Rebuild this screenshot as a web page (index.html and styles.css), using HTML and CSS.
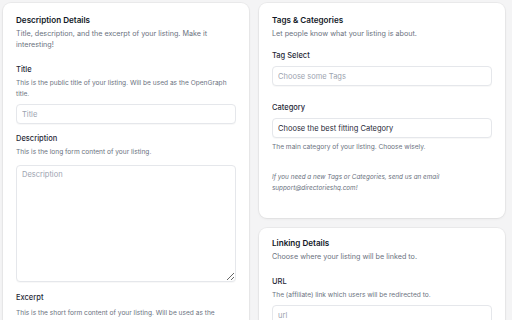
FILE: index.html
```html
<!DOCTYPE html>
<html lang="en">
<head>
    <meta charset="UTF-8">
    <meta name="viewport" content="width=device-width, initial-scale=1.0">
    <title>Edit Listing</title>
    <link rel="stylesheet" href="styles.css">
</head>
<body>
    <div class="layout">
        <div class="column">
            <section class="card">
                <h2>Description Details</h2>
                <p class="subtitle">Title, description, and the excerpt of your listing. Make it interesting!</p>

                <div class="field field-first">
                    <label for="title">Title</label>
                    <p class="help">This is the public title of your listing. Will be used as the OpenGraph title.</p>
                    <input type="text" id="title" placeholder="Title">
                </div>

                <div class="field field-description">
                    <label for="description">Description</label>
                    <p class="help">This is the long form content of your listing.</p>
                    <textarea id="description" placeholder="Description"></textarea>
                </div>

                <div class="field field-excerpt">
                    <label for="excerpt">Excerpt</label>
                    <p class="help">This is the short form content of your listing. Will be used as the OpenGraph description.</p>
                </div>
            </section>
        </div>

        <div class="column">
            <section class="card card-tags">
                <h2>Tags &amp; Categories</h2>
                <p class="subtitle">Let people know what your listing is about.</p>

                <div class="field field-tags">
                    <label for="tags">Tag Select</label>
                    <input type="text" id="tags" placeholder="Choose some Tags">
                </div>

                <div class="field field-category">
                    <label for="category">Category</label>
                    <input type="text" id="category" value="Choose the best fitting Category">
                    <p class="help help-below">The main category of your listing. Choose wisely.</p>
                </div>

                <p class="note">If you need a new Tags or Categories, send us an email support@directorieshq.com!</p>
            </section>

            <section class="card card-linking">
                <h2>Linking Details</h2>
                <p class="subtitle">Choose where your listing will be linked to.</p>

                <div class="field field-url">
                    <label for="url">URL</label>
                    <p class="help">The (affiliate) link which users will be redirected to.</p>
                    <input type="text" id="url" placeholder="url">
                </div>
            </section>
        </div>
    </div>
</body>
</html>
```

FILE: styles.css
```css
body {
    font-family: 'Inter', 'Liberation Sans', sans-serif;
    background-color: #f4f4f5;
    margin: 0;
    padding: 3px 7px 0 3px;
    overflow: hidden;
    color: #111827;
}
.layout {
    display: grid;
    grid-template-columns: 246px 246px;
    column-gap: 10px;
    align-items: start;
}
.column {
    display: flex;
    flex-direction: column;
    gap: 10px;
}
.card {
    background-color: white;
    border-radius: 8px;
    box-shadow: 0 0 0 1px rgba(0, 0, 0, 0.035), 0 1px 3px rgba(0, 0, 0, 0.06);
    padding: 12px 13px 20px;
}
.card-tags {
    padding-bottom: 24px;
}
.card-linking {
    padding-top: 10px;
}
h2 {
    margin: 0;
    font-size: 8.1px;
    line-height: 11px;
    font-weight: 600;
    color: #111827;
}
.subtitle {
    margin: 2px 0 0;
    font-size: 7.2px;
    line-height: 11px;
    color: #6b7280;
}
.field {
    display: flex;
    flex-direction: column;
    margin-top: 10px;
}
.field-first {
    margin-top: 15px;
}
label {
    font-size: 7.5px;
    line-height: 10px;
    font-weight: 500;
    color: #1f2937;
}
.help {
    margin: 3px 0 4px;
    font-size: 6.6px;
    line-height: 11px;
    color: #6b7280;
}
.help-below {
    margin: 4px 0 0;
}
.field-description textarea {
    margin-top: 3px;
}
.field-excerpt {
    margin-top: 11px;
}
.field-excerpt .help {
    margin-top: 5px;
}
input,
textarea {
    font-family: inherit;
    font-size: 7.5px;
    color: #1f2937;
    height: 20px;
    padding: 0 5px;
    border: 1px solid #e5e7eb;
    border-radius: 4px;
    box-sizing: border-box;
    box-shadow: 0 1px 1px rgba(0, 0, 0, 0.03);
    outline: none;
    width: 100%;
}
textarea {
    height: 117px;
    padding: 4px 5px;
    resize: vertical;
}
input::placeholder,
textarea::placeholder {
    color: #9ca3af;
}
.field-tags {
    margin-top: 12px;
}
.field-tags label,
.field-category label {
    margin-bottom: 5px;
}
.field-category {
    margin-top: 17px;
}
.field-url {
    margin-top: 15px;
}
.note {
    margin: 19px 0 0;
    font-size: 6.35px;
    line-height: 11px;
    font-style: italic;
    color: #6b7280;
}
```
